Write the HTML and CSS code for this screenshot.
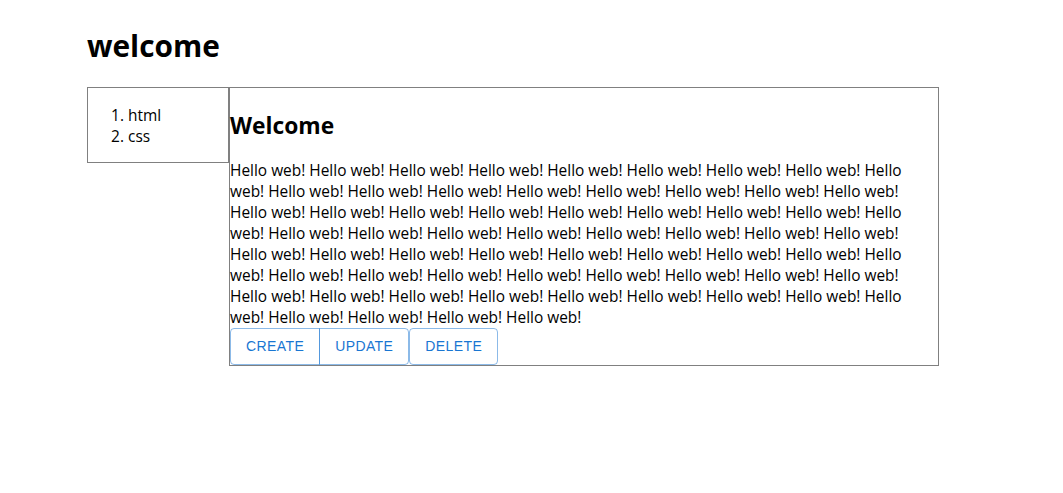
FILE: index.html
```html
<!DOCTYPE html>
<html lang="en">
<head>
<meta charset="utf-8">
<title>welcome</title>
<link rel="stylesheet" href="styles.css">
</head>
<body>
<div class="page">
  <h1 class="title">welcome</h1>
  <div class="grid">
    <nav class="nav">
      <ol class="toc">
        <li>html</li>
        <li>css</li>
      </ol>
    </nav>
    <article class="article">
      <h2 class="heading">Welcome</h2>
      <p class="body">Hello web! Hello web! Hello web! Hello web! Hello web! Hello web! Hello web! Hello web! Hello web! Hello web! Hello web! Hello web! Hello web! Hello web! Hello web! Hello web! Hello web! Hello web! Hello web! Hello web! Hello web! Hello web! Hello web! Hello web! Hello web! Hello web! Hello web! Hello web! Hello web! Hello web! Hello web! Hello web! Hello web! Hello web! Hello web! Hello web! Hello web! Hello web! Hello web! Hello web! Hello web! Hello web! Hello web! Hello web! Hello web! Hello web! Hello web! Hello web! Hello web! Hello web! Hello web! Hello web! Hello web! Hello web! Hello web! Hello web! Hello web! Hello web! Hello web! Hello web! Hello web! Hello web! Hello web! Hello web!</p>
      <div class="actions">
        <div class="group">
          <button class="btn">CREATE</button>
          <button class="btn">UPDATE</button>
        </div>
        <button class="btn single">DELETE</button>
      </div>
    </article>
  </div>
</div>
</body>
</html>
```
FILE: styles.css
```css
html, body {
  margin: 0;
  background: #fff;
}
body {
  font-family: "Open Sans", "Noto Sans", sans-serif;
  font-size: 15.45px;
  color: #000;
}
.page {
  padding: 0 0 0 87px;
}
.title {
  margin: 0;
  padding: 24px 0 20px;
  font-size: 29.8px;
  line-height: 43px;
  font-weight: 700;
}
.grid {
  display: flex;
  align-items: flex-start;
}
.nav {
  width: 140px;
  border: 1px solid #808080;
  flex: none;
}
.toc {
  margin: 17px 0 15px;
  padding-left: 40px;
  line-height: 21px;
}
.article {
  width: 708px;
  border: 1px solid #808080;
  flex: none;
}
.heading {
  margin: 22px 0 18px;
  font-size: 22.8px;
  line-height: 32px;
  font-weight: 700;
}
.body {
  margin: 0;
  line-height: 21px;
}
.actions {
  display: flex;
}
.group {
  display: flex;
}
.btn {
  font-family: "Liberation Sans", Arial, sans-serif;
  font-size: 14px;
  letter-spacing: 0.4px;
  line-height: 24.5px;
  padding: 5px 15px;
  min-width: 64px;
  color: #1976d2;
  background: transparent;
  border: 1px solid rgba(25, 118, 210, 0.5);
  border-radius: 4px;
  margin: 0;
}
.group .btn:first-child {
  border-top-right-radius: 0;
  border-bottom-right-radius: 0;
}
.group .btn + .btn {
  margin-left: -1px;
  border-top-left-radius: 0;
  border-bottom-left-radius: 0;
}
```
